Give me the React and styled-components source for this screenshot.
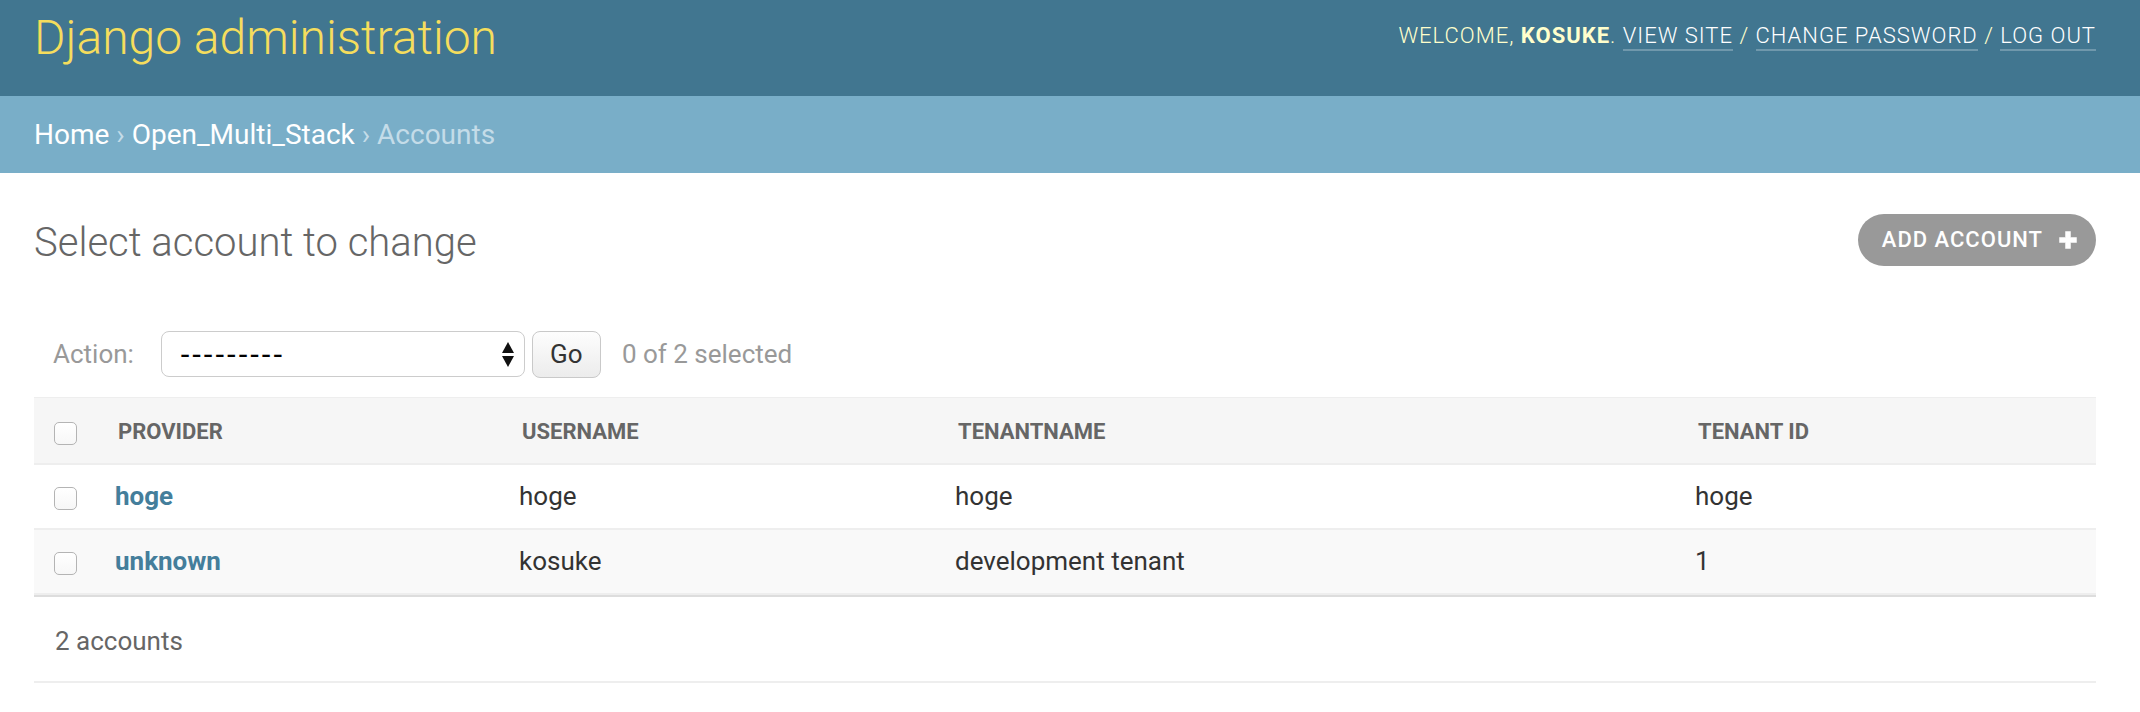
import React from 'react';
import styled, { createGlobalStyle } from 'styled-components';

const GlobalStyle = createGlobalStyle`
  html, body {
    margin: 0;
    padding: 0;
    background: #fff;
  }
  body {
    font-family: Roboto, 'Liberation Sans', sans-serif;
    color: #333;
  }
  * {
    box-sizing: border-box;
  }
`

const Header = styled.div`
  display: flex;
  justify-content: space-between;
  align-items: flex-start;
  height: 96px;
  padding: 10px 44px 0 34px;
  background: #417690;
  color: #ffc;
`

const Branding = styled.h1`
  margin: 0;
  font-size: 48px;
  line-height: 56px;
  font-weight: 300;
  color: #f5dd5d;
`

const UserTools = styled.div`
  padding-top: 10px;
  font-size: 22px;
  line-height: 32px;
  font-weight: 300;
  letter-spacing: 1px;
  text-transform: uppercase;
  color: #ffc;
  text-align: right;

  strong {
    font-weight: 700;
  }
`

const ToolLink = styled.a`
  color: #fff;
  text-decoration: none;
  border-bottom: 2px solid rgba(255, 255, 255, 0.25);
  padding-bottom: 1px;
`

const Breadcrumbs = styled.div`
  padding: 21px 44px 20px 34px;
  background: #79aec8;
  color: #c4dce8;
  font-size: 28px;
  line-height: 36px;
`

const Crumb = styled.a`
  color: #fff;
  text-decoration: none;
`

const Content = styled.div`
  padding: 40px 44px 0 34px;
`

const TitleRow = styled.div`
  display: flex;
  justify-content: space-between;
  align-items: center;
  height: 53px;
  margin-bottom: 45px;
`

const Title = styled.h1`
  margin: 0;
  padding-top: 6px;
  font-size: 40px;
  line-height: 48px;
  font-weight: 300;
  color: #666;
`

const AddLink = styled.a`
  display: flex;
  align-items: center;
  gap: 15px;
  height: 52px;
  padding: 0 18px 0 24px;
  border-radius: 26px;
  background: #999;
  color: #fff;
  font-size: 22px;
  font-weight: 500;
  letter-spacing: 1px;
  text-transform: uppercase;
  text-decoration: none;
`

const Actions = styled.div`
  display: flex;
  align-items: center;
  height: 86px;
  padding: 20px 19px;
  color: #999;
  font-size: 26px;
`

const ActionLabel = styled.label`
  line-height: 46px;
  margin-right: 27px;
`

const Select = styled.div`
  display: flex;
  align-items: center;
  justify-content: space-between;
  width: 364px;
  height: 46px;
  padding: 0 10px 0 18px;
  border: 1px solid #ccc;
  border-radius: 8px;
  background: #fff;
  color: #000;
`

const Dashes = styled.span`
  font-family: 'DejaVu Sans', sans-serif;
  font-size: 28px;
  font-weight: 400;
  letter-spacing: 1.5px;
`

const GoButton = styled.button`
  width: 69px;
  height: 47px;
  margin-left: 7px;
  padding: 0;
  border: 1px solid #c9c9c9;
  border-radius: 8px;
  background: linear-gradient(#fdfdfd, #ececec);
  color: #333;
  font-family: Roboto, 'Liberation Sans', sans-serif;
  font-size: 26px;
`

const Counter = styled.span`
  margin-left: 21px;
  line-height: 46px;
  color: #999;
`

const ResultTable = styled.table`
  width: 100%;
  table-layout: fixed;
  border-collapse: separate;
  border-spacing: 0;
`

const HeadCell = styled.th`
  padding: 2px 0 0 ${p => p.$check ? 20 : 19}px;
  line-height: 63px;
  background: #f6f6f6;
  border-top: 1px solid #eee;
  border-bottom: 2px solid #eee;
  text-align: left;
  font-size: 22px;
  font-weight: 700;
  color: #666;
  text-transform: uppercase;
  white-space: nowrap;
`

const Row = styled.tr`
  background: ${p => p.$alt ? '#f9f9f9' : '#fff'};
`

const Cell = styled.td`
  padding: 0 0 0 ${p => p.$check ? 20 : 16}px;
  line-height: 63px;
  border-bottom: 2px solid #eee;
  font-size: 26px;
  color: #333;
  white-space: nowrap;
`

const RowLink = styled.a`
  color: #447e9b;
  font-weight: 700;
  text-decoration: none;
`

const Checkbox = styled.span`
  display: inline-block;
  vertical-align: middle;
  width: 23px;
  height: 23px;
  border: 1px solid #b4b4b4;
  border-radius: 5px;
  background: linear-gradient(#fff, #f7f7f7);
`

const Paginator = styled.p`
  margin: 0;
  padding: 22px 21px 18px;
  line-height: 44px;
  border-top: 2px solid #ddd;
  border-bottom: 2px solid #eee;
  font-size: 26px;
  color: #666;
`

const PlusIcon = () => (
  <svg width="20" height="20" viewBox="0 0 20 20">
    <path d="M7.5 1.5h5v6h6v5h-6v6h-5v-6h-6v-5h6z" fill="#fff" stroke="#fff" strokeWidth="0.5" strokeLinejoin="round" />
  </svg>
)

const SelectArrows = () => (
  <svg width="12" height="25" viewBox="0 0 12 25">
    <path d="M6 0L12 11H0z" fill="#111" />
    <path d="M0 14H12L6 25z" fill="#111" />
  </svg>
)

const columns = ['Provider', 'Username', 'Tenantname', 'Tenant ID']
const widths = [65, 404, 436, 740, 417]

const accounts = [
  { provider: 'hoge', username: 'hoge', tenantname: 'hoge', tenantId: 'hoge' },
  { provider: 'unknown', username: 'kosuke', tenantname: 'development tenant', tenantId: '1' },
]

export default function App() {
  return (
    <>
      <GlobalStyle />
      <Header>
        <Branding>Django administration</Branding>
        <UserTools>
          Welcome, <strong>kosuke</strong>.{' '}
          <ToolLink href="#">View site</ToolLink> /{' '}
          <ToolLink href="#">Change password</ToolLink> /{' '}
          <ToolLink href="#">Log out</ToolLink>
        </UserTools>
      </Header>
      <Breadcrumbs>
        <Crumb href="#">Home</Crumb> › <Crumb href="#">Open_Multi_Stack</Crumb> › Accounts
      </Breadcrumbs>
      <Content>
        <TitleRow>
          <Title>Select account to change</Title>
          <AddLink href="#">
            Add account
            <PlusIcon />
          </AddLink>
        </TitleRow>
        <Actions>
          <ActionLabel>Action:</ActionLabel>
          <Select>
            <Dashes>---------</Dashes>
            <SelectArrows />
          </Select>
          <GoButton>Go</GoButton>
          <Counter>0 of 2 selected</Counter>
        </Actions>
        <ResultTable>
          <colgroup>
            {widths.map((w, i) => <col key={i} style={{ width: w }} />)}
          </colgroup>
          <thead>
            <tr>
              <HeadCell $check><Checkbox /></HeadCell>
              {columns.map(c => <HeadCell key={c}>{c}</HeadCell>)}
            </tr>
          </thead>
          <tbody>
            {accounts.map((a, i) => (
              <Row key={a.provider} $alt={i % 2 === 1}>
                <Cell $check><Checkbox /></Cell>
                <Cell><RowLink href="#">{a.provider}</RowLink></Cell>
                <Cell>{a.username}</Cell>
                <Cell>{a.tenantname}</Cell>
                <Cell>{a.tenantId}</Cell>
              </Row>
            ))}
          </tbody>
        </ResultTable>
        <Paginator>2 accounts</Paginator>
      </Content>
    </>
  )
}
